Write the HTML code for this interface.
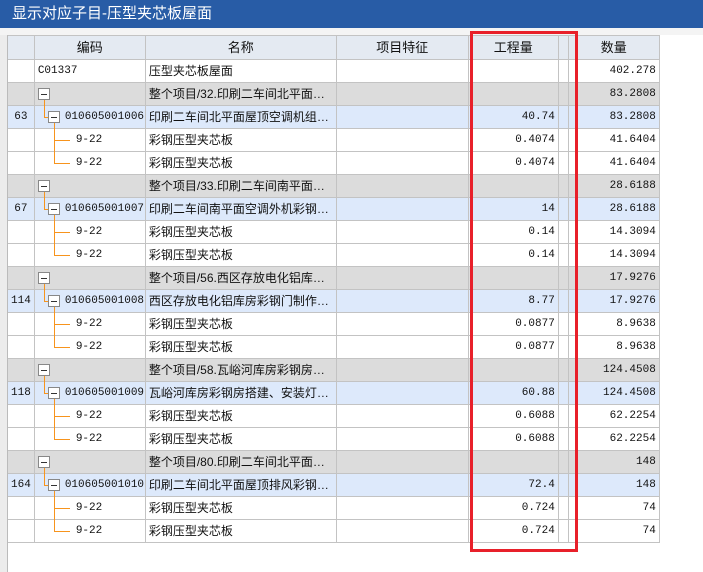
<!DOCTYPE html>
<html><head><meta charset="utf-8"><style>
*{margin:0;padding:0;box-sizing:border-box}
body{width:703px;height:572px;overflow:hidden;background:#fff;position:relative;font-family:"Liberation Sans","Noto Sans CJK SC",sans-serif;font-size:12px;color:#111}
.title{position:absolute;left:0;top:0;width:703px;height:28px;background:#285ca6;color:#fff;font-size:15px;line-height:28px;padding-left:12px}
.strip{position:absolute;left:0;top:28px;width:703px;height:7px;background:#f4f4f4}
.lft{position:absolute;left:0;top:35px;width:8px;height:537px;background:#ececec;border-right:1px solid #bbb}
table{position:absolute;left:7px;top:35px;border-collapse:collapse;table-layout:fixed}
td{border:1px solid #c3c3c3;height:23px;padding:0 3px;white-space:nowrap;overflow:hidden;font-size:12px;line-height:21px}
thead td{background:#e4eaf2;text-align:center;height:24px;font-size:13px}
.n{font-family:"Liberation Mono",monospace;font-size:11px;text-align:right}
.ix{text-align:center;font-family:"Liberation Mono",monospace;font-size:11px}
tr.g td{background:#dcdcdc}
tr.i td{background:#dde9fb}
td.t{position:relative;overflow:visible;padding:0}
.b{position:absolute;width:12px;height:12px;border:1px solid #888;background:#fff;top:5px}
.b:after{content:"";position:absolute;left:2px;top:5px;width:6px;height:1px;background:#333}
.v{position:absolute;width:1px;background:#f7941d}
.h{position:absolute;height:1px;background:#f7941d;top:11px}
.tx{position:absolute;top:0;line-height:22px;font-family:"Liberation Mono",monospace;font-size:11px}
.red{position:absolute;left:470px;top:31px;width:108px;height:521px;border:3px solid #e8202a}
</style></head><body>
<div class="title">显示对应子目-压型夹芯板屋面</div>
<div class="strip"></div>
<table>
<colgroup><col style="width:26px"><col style="width:111px"><col style="width:191px"><col style="width:132px"><col style="width:90px"><col style="width:10px"><col style="width:91px"></colgroup>
<thead><tr><td></td><td>编码</td><td>名称</td><td>项目特征</td><td>工程量</td><td></td><td>数量</td></tr></thead>
<tbody>
<tr><td></td><td class="n" style="text-align:left">C01337</td><td>压型夹芯板屋面</td><td></td><td></td><td></td><td class="n">402.278</td></tr>

<tr class="g"><td></td><td class="t"><span class="b" style="left:3px"></span><span class="v" style="left:9px;top:17px;height:6px"></span></td><td>整个项目/32.印刷二车间北平面…</td><td></td><td></td><td></td><td class="n">83.2808</td></tr>
<tr class="i"><td class="ix">63</td><td class="t"><span class="v" style="left:9px;top:0;height:11px"></span><span class="h" style="left:9px;width:4px"></span><span class="b" style="left:13px"></span><span class="v" style="left:19px;top:17px;height:6px"></span><span class="tx" style="left:30px">010605001006</span></td><td>印刷二车间北平面屋顶空调机组…</td><td></td><td class="n">40.74</td><td></td><td class="n">83.2808</td></tr>
<tr><td></td><td class="t"><span class="v" style="left:19px;top:0;height:23px"></span><span class="h" style="left:19px;width:16px"></span><span class="tx" style="left:41px">9-22</span></td><td>彩钢压型夹芯板</td><td></td><td class="n">0.4074</td><td></td><td class="n">41.6404</td></tr>
<tr><td></td><td class="t"><span class="v" style="left:19px;top:0;height:12px"></span><span class="h" style="left:19px;width:16px"></span><span class="tx" style="left:41px">9-22</span></td><td>彩钢压型夹芯板</td><td></td><td class="n">0.4074</td><td></td><td class="n">41.6404</td></tr>

<tr class="g"><td></td><td class="t"><span class="b" style="left:3px"></span><span class="v" style="left:9px;top:17px;height:6px"></span></td><td>整个项目/33.印刷二车间南平面…</td><td></td><td></td><td></td><td class="n">28.6188</td></tr>
<tr class="i"><td class="ix">67</td><td class="t"><span class="v" style="left:9px;top:0;height:11px"></span><span class="h" style="left:9px;width:4px"></span><span class="b" style="left:13px"></span><span class="v" style="left:19px;top:17px;height:6px"></span><span class="tx" style="left:30px">010605001007</span></td><td>印刷二车间南平面空调外机彩钢…</td><td></td><td class="n">14</td><td></td><td class="n">28.6188</td></tr>
<tr><td></td><td class="t"><span class="v" style="left:19px;top:0;height:23px"></span><span class="h" style="left:19px;width:16px"></span><span class="tx" style="left:41px">9-22</span></td><td>彩钢压型夹芯板</td><td></td><td class="n">0.14</td><td></td><td class="n">14.3094</td></tr>
<tr><td></td><td class="t"><span class="v" style="left:19px;top:0;height:12px"></span><span class="h" style="left:19px;width:16px"></span><span class="tx" style="left:41px">9-22</span></td><td>彩钢压型夹芯板</td><td></td><td class="n">0.14</td><td></td><td class="n">14.3094</td></tr>

<tr class="g"><td></td><td class="t"><span class="b" style="left:3px"></span><span class="v" style="left:9px;top:17px;height:6px"></span></td><td>整个项目/56.西区存放电化铝库…</td><td></td><td></td><td></td><td class="n">17.9276</td></tr>
<tr class="i"><td class="ix">114</td><td class="t"><span class="v" style="left:9px;top:0;height:11px"></span><span class="h" style="left:9px;width:4px"></span><span class="b" style="left:13px"></span><span class="v" style="left:19px;top:17px;height:6px"></span><span class="tx" style="left:30px">010605001008</span></td><td>西区存放电化铝库房彩钢门制作…</td><td></td><td class="n">8.77</td><td></td><td class="n">17.9276</td></tr>
<tr><td></td><td class="t"><span class="v" style="left:19px;top:0;height:23px"></span><span class="h" style="left:19px;width:16px"></span><span class="tx" style="left:41px">9-22</span></td><td>彩钢压型夹芯板</td><td></td><td class="n">0.0877</td><td></td><td class="n">8.9638</td></tr>
<tr><td></td><td class="t"><span class="v" style="left:19px;top:0;height:12px"></span><span class="h" style="left:19px;width:16px"></span><span class="tx" style="left:41px">9-22</span></td><td>彩钢压型夹芯板</td><td></td><td class="n">0.0877</td><td></td><td class="n">8.9638</td></tr>

<tr class="g"><td></td><td class="t"><span class="b" style="left:3px"></span><span class="v" style="left:9px;top:17px;height:6px"></span></td><td>整个项目/58.瓦峪河库房彩钢房…</td><td></td><td></td><td></td><td class="n">124.4508</td></tr>
<tr class="i"><td class="ix">118</td><td class="t"><span class="v" style="left:9px;top:0;height:11px"></span><span class="h" style="left:9px;width:4px"></span><span class="b" style="left:13px"></span><span class="v" style="left:19px;top:17px;height:6px"></span><span class="tx" style="left:30px">010605001009</span></td><td>瓦峪河库房彩钢房搭建、安装灯…</td><td></td><td class="n">60.88</td><td></td><td class="n">124.4508</td></tr>
<tr><td></td><td class="t"><span class="v" style="left:19px;top:0;height:23px"></span><span class="h" style="left:19px;width:16px"></span><span class="tx" style="left:41px">9-22</span></td><td>彩钢压型夹芯板</td><td></td><td class="n">0.6088</td><td></td><td class="n">62.2254</td></tr>
<tr><td></td><td class="t"><span class="v" style="left:19px;top:0;height:12px"></span><span class="h" style="left:19px;width:16px"></span><span class="tx" style="left:41px">9-22</span></td><td>彩钢压型夹芯板</td><td></td><td class="n">0.6088</td><td></td><td class="n">62.2254</td></tr>

<tr class="g"><td></td><td class="t"><span class="b" style="left:3px"></span><span class="v" style="left:9px;top:17px;height:6px"></span></td><td>整个项目/80.印刷二车间北平面…</td><td></td><td></td><td></td><td class="n">148</td></tr>
<tr class="i"><td class="ix">164</td><td class="t"><span class="v" style="left:9px;top:0;height:11px"></span><span class="h" style="left:9px;width:4px"></span><span class="b" style="left:13px"></span><span class="v" style="left:19px;top:17px;height:6px"></span><span class="tx" style="left:30px">010605001010</span></td><td>印刷二车间北平面屋顶排风彩钢…</td><td></td><td class="n">72.4</td><td></td><td class="n">148</td></tr>
<tr><td></td><td class="t"><span class="v" style="left:19px;top:0;height:23px"></span><span class="h" style="left:19px;width:16px"></span><span class="tx" style="left:41px">9-22</span></td><td>彩钢压型夹芯板</td><td></td><td class="n">0.724</td><td></td><td class="n">74</td></tr>
<tr><td></td><td class="t"><span class="v" style="left:19px;top:0;height:12px"></span><span class="h" style="left:19px;width:16px"></span><span class="tx" style="left:41px">9-22</span></td><td>彩钢压型夹芯板</td><td></td><td class="n">0.724</td><td></td><td class="n">74</td></tr>
</tbody></table>
<div class="lft"></div>
<div class="red"></div>
</body></html>
